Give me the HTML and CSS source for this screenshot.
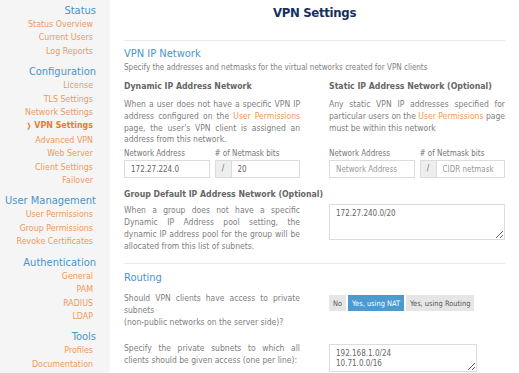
FILE: index.html
```html
<!DOCTYPE html>
<html lang="en">
<head>
  <meta charset="UTF-8" />
  <title>VPN Settings</title>
  <link rel="stylesheet" href="styles.css">
</head>
<body>
  <div class="layout">
    <nav class="sidebar">
      <div class="nav-group">
        <div class="nav-title">Status</div>
        <a class="nav-link">Status Overview</a>
        <a class="nav-link">Current Users</a>
        <a class="nav-link">Log Reports</a>
      </div>
      <div class="nav-group">
        <div class="nav-title">Configuration</div>
        <a class="nav-link">License</a>
        <a class="nav-link">TLS Settings</a>
        <a class="nav-link">Network Settings</a>
        <a class="nav-link active"><span class="chev">&#x276F;</span> VPN Settings</a>
        <a class="nav-link">Advanced VPN</a>
        <a class="nav-link">Web Server</a>
        <a class="nav-link">Client Settings</a>
        <a class="nav-link">Failover</a>
      </div>
      <div class="nav-group">
        <div class="nav-title">User Management</div>
        <a class="nav-link">User Permissions</a>
        <a class="nav-link">Group Permissions</a>
        <a class="nav-link">Revoke Certificates</a>
      </div>
      <div class="nav-group">
        <div class="nav-title">Authentication</div>
        <a class="nav-link">General</a>
        <a class="nav-link">PAM</a>
        <a class="nav-link">RADIUS</a>
        <a class="nav-link">LDAP</a>
      </div>
      <div class="nav-group">
        <div class="nav-title">Tools</div>
        <a class="nav-link">Profiles</a>
        <a class="nav-link">Documentation</a>
      </div>
    </nav>

    <main class="main">
      <h1 class="page-title">VPN Settings</h1>

      <section class="section">
        <h2 class="section-title">VPN IP Network</h2>
        <p class="section-desc">Specify the addresses and netmasks for the virtual networks created for VPN clients</p>

        <div class="grid">
          <h3 class="field-title">Dynamic IP Address Network</h3>
          <h3 class="field-title">Static IP Address Network (Optional)</h3>

          <p class="text">When a user does not have a specific VPN IP address configured on the <a class="link">User Permissions</a> page, the user's VPN client is assigned an address from this network.</p>
          <p class="text">Any static VPN IP addresses specified for particular users on the <a class="link">User Permissions</a> page must be within this network</p>

          <div class="net-row">
            <div class="net-field">
              <label>Network Address</label>
              <input class="input" type="text" value="172.27.224.0">
            </div>
            <div class="net-field">
              <label># of Netmask bits</label>
              <div class="input-group">
                <span class="addon">/</span>
                <input class="input" type="text" value="20">
              </div>
            </div>
          </div>
          <div class="net-row">
            <div class="net-field">
              <label>Network Address</label>
              <input class="input" type="text" placeholder="Network Address">
            </div>
            <div class="net-field">
              <label># of Netmask bits</label>
              <div class="input-group">
                <span class="addon">/</span>
                <input class="input" type="text" placeholder="CIDR netmask">
              </div>
            </div>
          </div>

          <div class="group-info">
            <h3 class="field-title">Group Default IP Address Network (Optional)</h3>
            <p class="text">When a group does not have a specific Dynamic IP Address pool setting, the dynamic IP address pool for the group will be allocated from this list of subnets.</p>
          </div>
          <div class="group-info">
            <textarea class="textarea tall">172.27.240.0/20</textarea>
          </div>
        </div>
      </section>

      <section class="section routing">
        <h2 class="section-title">Routing</h2>
        <div class="grid">
          <p class="text">Should VPN clients have access to private subnets<br>(non-public networks on the server side)?</p>
          <div class="btn-group">
            <button class="btn">No</button>
            <button class="btn selected">Yes, using NAT</button>
            <button class="btn">Yes, using Routing</button>
          </div>

          <p class="text subnets">Specify the private subnets to which all clients should be given access (one per line):</p>
          <div class="subnets">
            <textarea class="textarea short">192.168.1.0/24
10.71.0.0/16</textarea>
          </div>
        </div>
      </section>
    </main>
  </div>
</body>
</html>
```

FILE: styles.css
```css
* { box-sizing: border-box; }
html, body { height: 100%; }
body {
  margin: 0;
  font-family: "DejaVu Sans Condensed", "DejaVu Sans", Verdana, sans-serif;
  font-stretch: condensed;
  font-size: 8px;
  color: #808080;
  background: #fff;
  overflow: hidden;
}
.layout {
  display: flex;
  height: 100%;
}
.sidebar {
  width: 110px;
  flex-shrink: 0;
  background: #f5f5f5;
  text-align: right;
  padding: 4px 17px 0 0;
}
.nav-group {
  display: flex;
  flex-direction: column;
  margin-bottom: 7px;
}
.nav-title {
  color: #4a94c9;
  font-size: 11px;
  line-height: 14px;
  margin-right: -3px;
}
.nav-link {
  color: #ee995c;
  font-size: 8.8px;
  line-height: 13.4px;
}
.nav-link.active {
  font-weight: bold;
  color: #e67d32;
}
.chev {
  font-size: 7px;
}
.main {
  flex: 1;
  min-width: 0;
  padding: 0 14px;
}
.page-title {
  margin: 0;
  text-align: center;
  font-size: 13px;
  letter-spacing: -0.3px;
  color: #15305d;
  line-height: 24px;
  padding-top: 1px;
  height: 41px;
  border-bottom: 1px solid #ebebeb;
}
.section {
  padding-top: 5px;
}
.section.routing {
  border-top: 1px solid #ebebeb;
  margin-top: 11px;
  padding-top: 6px;
}
.section-title {
  margin: 0;
  font-weight: normal;
  font-size: 11px;
  color: #4a94c9;
  line-height: 16px;
}
.section-desc {
  margin: 0 0 6px;
  line-height: 12px;
}
.grid {
  display: grid;
  grid-template-columns: minmax(0, 1fr) minmax(0, 1fr);
  column-gap: 29px;
  align-items: start;
}
.field-title {
  margin: 0 0 7px;
  font-size: 8.7px;
  color: #666;
  line-height: 12px;
  white-space: nowrap;
}
.text {
  margin: 0;
  font-size: 8.5px;
  line-height: 11.8px;
  text-align: justify;
}
.link {
  color: #ee995c;
}
.net-row {
  display: flex;
  gap: 5px;
  margin-top: 2px;
}
.net-field {
  flex: 1;
  min-width: 0;
  display: flex;
  flex-direction: column;
}
.net-field label {
  line-height: 12px;
  color: #777;
}
.input {
  font: inherit;
  color: #666;
  height: 18px;
  width: 100%;
  min-width: 0;
  border: 1px solid #dcdcdc;
  padding: 0 6px;
  outline: none;
}
.input::placeholder {
  color: #999;
}
.input-group {
  display: flex;
}
.addon {
  width: 16px;
  flex-shrink: 0;
  background: #eee;
  border: 1px solid #dcdcdc;
  border-right: none;
  text-align: center;
  line-height: 16px;
  color: #666;
}
.group-info {
  margin-top: 10px;
}
.group-info .field-title {
  margin-bottom: 5px;
}
.textarea {
  font: inherit;
  color: #666;
  width: 100%;
  border: 1px solid #dcdcdc;
  padding: 4px 6px;
  resize: vertical;
  display: block;
  outline: none;
  line-height: 10px;
}
.tall {
  margin-top: 16px;
  height: 36px;
}
.short {
  width: 148px;
  height: 28px;
  margin-top: 1px;
}
.routing .grid {
  margin-top: 7px;
}
.btn-group {
  display: flex;
  gap: 2px;
  margin-top: 2px;
}
.btn {
  font: inherit;
  font-size: 7.4px;
  border: none;
  background: #e6e6e6;
  color: #555;
  height: 16px;
  padding: 0 4px;
}
.btn.selected {
  background: #4b9bd1;
  color: #fff;
}
.subnets {
  margin-top: 14px;
}
```
